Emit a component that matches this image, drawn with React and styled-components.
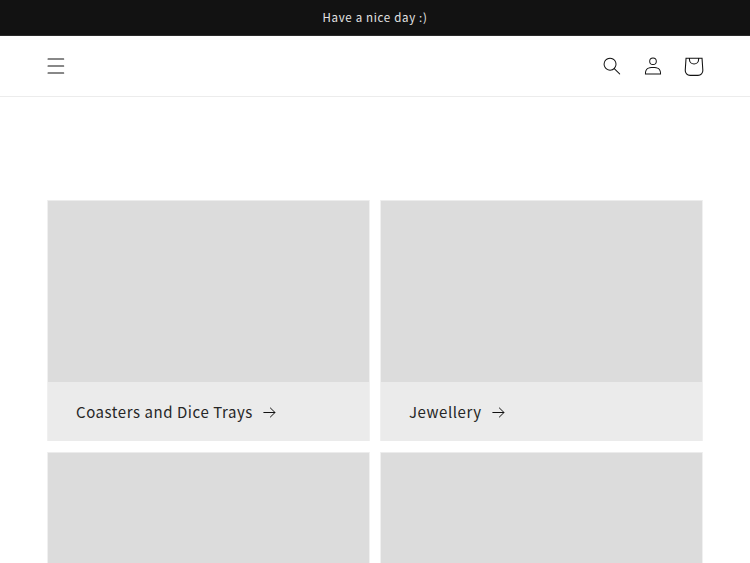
import React from "react";
import styled, { createGlobalStyle } from "styled-components";

const Global = createGlobalStyle`
  html, body { margin: 0; padding: 0; background: #fff; overflow: hidden; }
  body { font-family: "Noto Sans CJK JP", "Noto Sans", sans-serif; color: #121212; }
  #root { height: 563px; overflow: hidden; }
`;
const Announcement = styled.div`
  height: 36px;
  box-sizing: border-box;
  padding-bottom: 2px;
  background: #121212;
  border-bottom: 1px solid #2a2a2a;
  display: flex;
  align-items: center;
  justify-content: center;
  color: #e4e4e4;
  font-size: 11.5px;
  letter-spacing: 0.68px;
`;
const Header = styled.header`
  height: 61px;
  box-sizing: border-box;
  border-bottom: 1px solid #ececec;
  padding: 0 35.8px 0 34px;
  display: flex;
  align-items: center;
  justify-content: space-between;
`;
const Actions = styled.div`
  display: flex;
  align-items: center;
`;
const IconButton = styled.button`
  width: ${(p) => p.$w || 41}px;
  height: 44px;
  padding: 0;
  border: 0;
  background: none;
  color: #121212;
  display: flex;
  align-items: center;
  justify-content: center;
`;
const Icon = styled.svg`
  width: ${(p) => p.$size}px;
  height: ${(p) => p.$size}px;
  fill: currentColor;
  display: block;
  flex: none;
`;
const Grid = styled.main`
  display: grid;
  grid-template-columns: repeat(2, 1fr);
  gap: 11px 10px;
  padding: 103px 47px 0;
`;
const Card = styled.a`
  display: flex;
  flex-direction: column;
  background: #ebebeb;
  border-left: 1px solid #f0f0f0;
  border-right: 1px solid #f0f0f0;
`;
const Placeholder = styled.div`
  height: 181px;
  background: #dcdcdc;
  border-top: 1px solid #ececec;
`;
const Caption = styled.div`
  height: 59px;
  padding: 0 28px;
  display: flex;
  align-items: center;
  gap: 10.5px;
  font-size: 15px;
  letter-spacing: 0.56px;
  color: #262626;
`;
const ArrowIcon = styled.svg`
  width: 13px;
  height: 11px;
  margin-top: 1px;
  display: block;
  flex: none;
  fill: none;
  stroke: #121212;
  stroke-width: 1;
  stroke-linecap: round;
  stroke-linejoin: round;
`;
const Arrow = () => (
  <ArrowIcon viewBox="0 0 13 11" aria-hidden="true">
    <path d="M.8 5.5H12M7.4 1 12 5.5 7.4 10" />
  </ArrowIcon>
);

export default function App() {
  return (
    <>
      <Global />
      <Announcement>Have a nice day :)</Announcement>
      <Header>
        <IconButton $w={44} aria-label="Menu">
          <Icon $size={18} viewBox="0 0 18 16"><path d="M1 .5a.5.5 0 100 1h15.71a.5.5 0 000-1H1zM.5 8a.5.5 0 01.5-.5h15.71a.5.5 0 010 1H1A.5.5 0 01.5 8zm0 7a.5.5 0 01.5-.5h15.71a.5.5 0 010 1H1a.5.5 0 01-.5-.5z" /></Icon>
        </IconButton>
        <Actions>
          <IconButton aria-label="Search">
            <Icon $size={18} viewBox="0 0 18 19"><path fillRule="evenodd" clipRule="evenodd" d="M11.03 11.68A5.784 5.784 0 112.85 3.5a5.784 5.784 0 018.18 8.18zm.26 1.12a6.78 6.78 0 11.72-.7l5.4 5.4a.5.5 0 11-.71.7l-5.41-5.4z" /></Icon>
          </IconButton>
          <IconButton aria-label="Account">
            <Icon $size={18} viewBox="0 0 18 19"><path fillRule="evenodd" clipRule="evenodd" d="M6 4.5a3 3 0 116 0 3 3 0 01-6 0zm3-4a4 4 0 100 8 4 4 0 000-8zm5.58 12.15c1.12.82 1.83 2.24 1.91 4.85H1.51c.08-2.6.79-4.03 1.9-4.85C4.66 11.75 6.5 11.5 9 11.5s4.35.26 5.58 1.15zM9 10.5c-2.5 0-4.65.24-6.17 1.35C1.27 12.98.5 14.93.5 18v.5h17V18c0-3.07-.77-5.02-2.33-6.15-1.52-1.1-3.67-1.35-6.17-1.35z" /></Icon>
          </IconButton>
          <IconButton aria-label="Cart">
            <Icon $size={43} viewBox="0 0 40 40"><path fillRule="evenodd" clipRule="evenodd" d="m15.75 11.8h-3.16l-.77 11.6a5 5 0 0 0 4.99 5.34h7.38a5 5 0 0 0 4.99-5.33l-.78-11.61zm0 1h-2.22l-.71 10.67a4 4 0 0 0 3.99 4.27h7.38a4 4 0 0 0 4-4.27l-.72-10.67h-2.22v.63a4.75 4.75 0 1 1-9.5 0zm8.5 0h-7.5v.63a3.75 3.75 0 1 0 7.5 0z" /></Icon>
          </IconButton>
        </Actions>
      </Header>
      <Grid>
        <Card><Placeholder /><Caption>Coasters and Dice Trays <Arrow /></Caption></Card>
        <Card><Placeholder /><Caption>Jewellery <Arrow /></Caption></Card>
        <Card><Placeholder /></Card>
        <Card><Placeholder /></Card>
      </Grid>
    </>
  );
}
